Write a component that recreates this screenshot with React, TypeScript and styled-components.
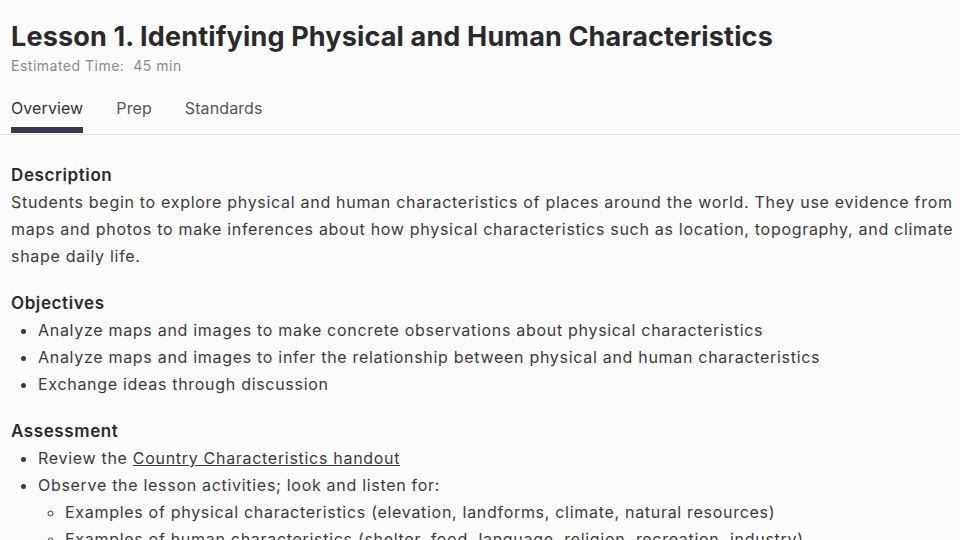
import React from 'react'
import styled, { createGlobalStyle } from 'styled-components'

const GlobalStyle = createGlobalStyle`
  body {
    margin: 0;
    background: #fcfcfc;
    font-family: Inter, 'Liberation Sans', sans-serif;
    color: #333335;
  }
`

const Page = styled.div`
  width: 960px;
  height: 540px;
  overflow: hidden;
  padding: 18px 0 0 11px;
  box-sizing: border-box;
`

const Title = styled.h1`
  margin: 0;
  font-size: 27px;
  line-height: 38px;
  font-weight: 700;
  color: #2a2a2c;
  letter-spacing: 0.15px;
`

const Meta = styled.div`
  font-size: 14px;
  line-height: 20px;
  color: #8a8a8c;
  letter-spacing: 0.5px;
`

const Tabs = styled.nav`
  display: flex;
  gap: 33px;
  margin: 20px 0 0 -11px;
  padding: 0 0 1px 11px;
  border-bottom: 1px solid #e2e2e4;
`

const Tab = styled.div<{ $active?: boolean }>`
  font-size: 16px;
  line-height: 24px;
  padding-bottom: 7px;
  letter-spacing: 0.1px;
  color: ${(p) => (p.$active ? '#333' : '#555558')};
  border-bottom: 6px solid ${(p) => (p.$active ? '#3b3950' : 'transparent')};
`

const Content = styled.main`
  padding-top: 27px;
`

const Section = styled.section`
  margin-bottom: 20px;
`

const Heading = styled.h2`
  margin: 0;
  font-size: 17px;
  line-height: 27px;
  font-weight: 600;
  color: #2a2a2c;
  letter-spacing: 0.6px;
`

const Para = styled.p`
  margin: 0;
  font-size: 16px;
  line-height: 27px;
  color: #3a3a3c;
  letter-spacing: 0.7px;
`

const List = styled.ul<{ $nested?: boolean }>`
  margin: 0;
  padding-left: 27px;
  list-style: ${(p) => (p.$nested ? 'circle' : 'disc')};
  font-size: 16px;
  line-height: 27px;
  color: #3a3a3c;
  letter-spacing: 0.7px;
`

const Link = styled.a`
  color: inherit;
  text-decoration: underline;
`

export default function App() {
  return (
    <Page>
      <GlobalStyle />
      <Title>Lesson 1. Identifying Physical and Human Characteristics</Title>
      <Meta>Estimated Time:&nbsp; 45 min</Meta>
      <Tabs>
        <Tab $active>Overview</Tab>
        <Tab>Prep</Tab>
        <Tab>Standards</Tab>
      </Tabs>
      <Content>
        <Section>
          <Heading>Description</Heading>
          <Para>
            Students begin to explore physical and human characteristics of places around the world. They use evidence
            from maps and photos to make inferences about how physical characteristics such as location, topography, and
            climate shape daily life.
          </Para>
        </Section>
        <Section>
          <Heading>Objectives</Heading>
          <List>
            <li>Analyze maps and images to make concrete observations about physical characteristics</li>
            <li>Analyze maps and images to infer the relationship between physical and human characteristics</li>
            <li>Exchange ideas through discussion</li>
          </List>
        </Section>
        <Section>
          <Heading>Assessment</Heading>
          <List>
            <li>
              Review the <Link>Country Characteristics handout</Link>
            </li>
            <li>
              Observe the lesson activities; look and listen for:
              <List $nested>
                <li>Examples of physical characteristics (elevation, landforms, climate, natural resources)</li>
                <li>Examples of human characteristics (shelter, food, language, religion, recreation, industry)</li>
              </List>
            </li>
          </List>
        </Section>
      </Content>
    </Page>
  )
}
